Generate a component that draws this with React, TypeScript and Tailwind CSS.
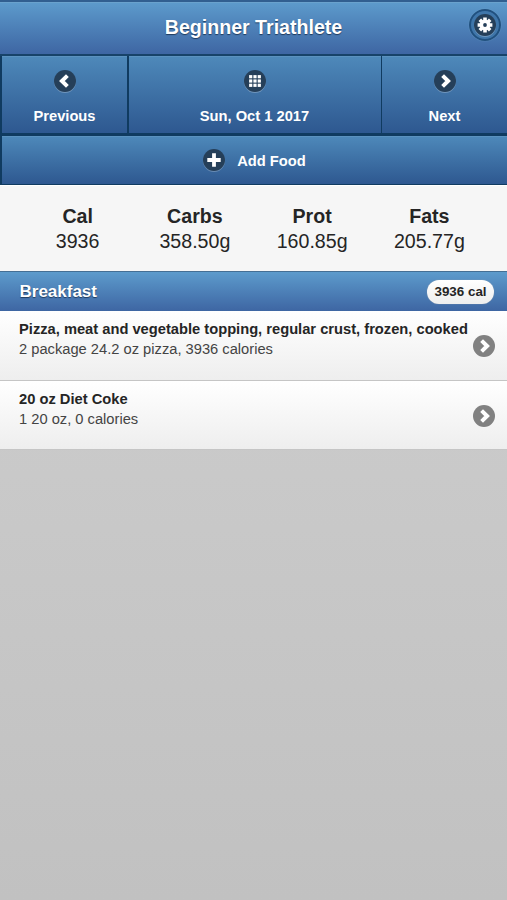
import React from 'react';

type Glyph = 'left' | 'right' | 'plus' | 'grid' | 'gear';

function DiscIcon({ glyph, disc = '#253f59' }: { glyph: Glyph; disc?: string }) {
  return (
    <svg viewBox="0 0 22 22" className="block size-[22px] shrink-0 overflow-visible" fill="none">
      <circle cx="11" cy="11.9" r="11" fill="#fff" opacity=".25" />
      <circle cx="11" cy="11" r="11" fill={disc} />
      {glyph === 'left' && <path d="M13.4 5.6 7.9 11l5.5 5.4" stroke="#fff" strokeWidth="4" />}
      {glyph === 'right' && <path d="M8.6 5.6 14.1 11l-5.5 5.4" stroke="#fff" strokeWidth="4" />}
      {glyph === 'plus' && <path d="M11 4.3v13.4M4.3 11h13.4" stroke="#fff" strokeWidth="3.8" />}
      {glyph === 'grid' && (
        <g fill="#fff">
          {[5.1, 9.4, 13.7].map((x) =>
            [5.1, 9.4, 13.7].map((y) => <rect key={`${x}-${y}`} x={x} y={y} width="3.2" height="3.2" />),
          )}
        </g>
      )}
      {glyph === 'gear' && (
        <g>
          <g stroke="#fff" strokeWidth="3.6">
            <path d="M11 3.6v14.8M3.6 11h14.8M5.8 5.8l10.4 10.4M16.2 5.8 5.8 16.2" />
          </g>
          <circle cx="11" cy="11" r="5.4" fill="#fff" />
          <circle cx="11" cy="11" r="1.9" fill={disc} />
        </g>
      )}
    </svg>
  );
}

const buttonFill = 'bg-linear-to-b from-[#4e89ba] to-[#2e5890]';
const barFill = 'bg-linear-to-b from-[#5d9bcc] to-[#3e66a3]';
const lightShadow = '[text-shadow:0_1px_1px_#1f3a5c]';

const totals = [
  ['Cal', '3936'],
  ['Carbs', '358.50g'],
  ['Prot', '160.85g'],
  ['Fats', '205.77g'],
];

const foods = [
  ['Pizza, meat and vegetable topping, regular crust, frozen, cooked', '2 package 24.2 oz pizza, 3936 calories'],
  ['20 oz Diet Coke', '1 20 oz, 0 calories'],
];

function NavButton({ glyph, label }: { glyph: Glyph; label: string }) {
  return (
    <button className={`flex flex-col items-center pt-[14px] shadow-[inset_0_1px_0_#5b92bf] ${buttonFill}`}>
      <DiscIcon glyph={glyph} />
      <span className="mt-[15px] text-[14.7px] leading-[18px]">{label}</span>
    </button>
  );
}

export default function App() {
  return (
    <div className="flex h-[900px] w-[507px] flex-col overflow-hidden bg-linear-to-b from-[#d2d2d2] to-[#c1c1c1] font-['Liberation_Sans',Arial,sans-serif] text-[#252525]">
      <header className={`grid h-[56px] shrink-0 grid-cols-[60px_1fr_60px] border-t-2 border-b-2 border-t-[#315f90] border-b-[#174369] text-white shadow-[inset_0_1px_0_#6aa2cd] ${barFill}`}>
        <h1 className={`col-start-2 pt-[13px] text-center text-[19.6px] leading-[24px] font-bold ${lightShadow}`}>
          Beginner Triathlete
        </h1>
        <button className="mt-[7px] ml-[22px] flex size-[32px] items-center justify-center rounded-full border-2 border-[#20507f] bg-[#3f76aa] shadow-[0_0_1px_#7badcf]">
          <DiscIcon glyph="gear" />
        </button>
      </header>

      <nav className={`shrink-0 bg-[#103b60] pl-[2px] font-bold text-white ${lightShadow}`}>
        <div className="grid h-[77px] grid-cols-[125px_252px_1fr] gap-x-[1.5px]">
          <NavButton glyph="left" label="Previous" />
          <NavButton glyph="grid" label="Sun, Oct 1 2017" />
          <NavButton glyph="right" label="Next" />
        </div>
        <button className={`mt-[3px] flex h-[48px] w-full items-center justify-center gap-[12px] shadow-[inset_0_1px_0_#5b92bf] ${buttonFill}`}>
          <DiscIcon glyph="plus" />
          <span className="pt-px text-[14.7px] leading-[18px]">Add Food</span>
        </button>
        <div className="h-px" />
      </nav>

      <section className="grid h-[86px] shrink-0 grid-cols-4 bg-[#f6f6f6] px-[19px] pt-[19px] text-center text-[19.6px] leading-[25px] shadow-[inset_0_1px_0_#fff]">
        {totals.map(([name, value]) => (
          <div key={name}>
            <div className="font-bold">{name}</div>
            <div>{value}</div>
          </div>
        ))}
      </section>

      <div className={`flex h-[40px] shrink-0 items-center justify-between border-t border-[#456f94] pr-[13px] pl-[19.5px] text-white ${barFill}`}>
        <h2 className={`pt-px text-[17px] leading-[22px] font-bold ${lightShadow}`}>Breakfast</h2>
        <span className="flex h-[24px] w-[67px] items-center justify-center rounded-full bg-linear-to-b from-white to-[#eee] pt-px text-[13.4px] font-bold whitespace-nowrap text-[#252525] shadow-[0_0_1px_#aaa]">
          3936 cal
        </span>
      </div>

      <ul className="shrink-0">
        {foods.map(([name, detail]) => (
          <li
            key={name}
            className="flex h-[69px] items-start justify-between border-b border-[#c5c5c5] bg-linear-to-b from-white to-[#eee] pt-[8px] pr-[12px] pl-[19px] first:h-[70px]"
          >
            <div className="whitespace-nowrap text-[14.7px] leading-[20px]">
              <h3 className="font-bold">{name}</h3>
              <p className="text-[#444]">{detail}</p>
            </div>
            <div className="pt-[16px]">
              <DiscIcon glyph="right" disc="#818181" />
            </div>
          </li>
        ))}
      </ul>
    </div>
  );
}
